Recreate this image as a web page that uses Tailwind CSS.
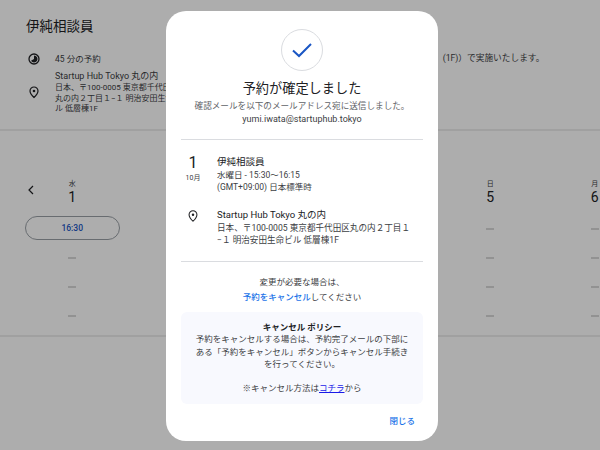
<!DOCTYPE html>
<html lang="ja">
<head>
  <meta charset="UTF-8" />
  <title>予約が確定しました</title>
  <script src="https://cdn.jsdelivr.net/npm/@tailwindcss/browser@4"></script>
</head>
<body class="relative w-[600px] h-[450px] overflow-hidden bg-white text-[#3c4043] font-['Roboto','Noto_Sans_CJK_JP',sans-serif]">

  <!-- Page behind the dialog -->
  <div class="h-[131px] border-b-2 border-[#ececec] pl-[26px] pt-[17px]">
    <h1 class="text-[13.5px] leading-[18px] text-[#202124]">伊純相談員</h1>
    <div class="flex items-center mt-[15px] h-[18px] text-[8.5px] whitespace-nowrap">
      <svg class="w-[16px] h-[16px] mr-[13px]" viewBox="0 0 16 16">
        <circle cx="8" cy="8" r="5" fill="none" stroke="#202124" stroke-width="1.3"/>
        <path d="M8 4.5a3.5 3.5 0 1 1-3 5.3L8 8z" fill="#202124"/>
      </svg>
      <span>45 分の予約</span>
      <span class="ml-[342px] text-[8.7px]">(1F)）で実施いたします。</span>
    </div>
    <div class="flex items-center mt-[2px]">
      <svg class="w-[16px] h-[16px] mr-[13px]" viewBox="0 0 16 16">
        <path d="M8 3a4 4 0 0 0-4 4c0 2.8 4 6.5 4 6.5s4-3.7 4-6.5a4 4 0 0 0-4-4z" fill="none" stroke="#202124" stroke-width="1.2"/>
        <circle cx="8" cy="7" r="1.3" fill="#202124"/>
      </svg>
      <div class="whitespace-nowrap">
        <div class="text-[9px] leading-[12px]">Startup Hub Tokyo 丸の内</div>
        <div class="text-[8px] leading-[10.5px] mt-[1px]">日本、〒100-0005 東京都千代田区<br>丸の内２丁目１−１ 明治安田生命ビ<br>ル 低層棟1F</div>
      </div>
    </div>
  </div>

  <div class="relative h-[206px] border-b-2 border-[#ececec]">
    <svg class="absolute left-[26px] top-[53px] w-[10px] h-[12px]" viewBox="0 0 10 12">
      <path d="M7 2 3 6l4 4" fill="none" stroke="#202124" stroke-width="1.2"/>
    </svg>
    <div class="ml-[20px] w-[580px] overflow-hidden grid grid-cols-[repeat(6,104.5px)] pt-[48px] text-center">
      <div class="flex flex-col items-center">
        <div class="text-[7px] leading-[10px]">水</div>
        <div class="text-[14px] leading-[17px] text-[#202124]">1</div>
        <div class="mt-[10px] w-[95px] h-[24px] border border-[#9aa0a6] rounded-[12px] flex items-center justify-center text-[8.5px] font-medium text-[#1a56c4]">16:30</div>
        <div class="mt-[17px] w-[8px] h-[2px] bg-[#d8d8d8]"></div>
        <div class="mt-[27px] w-[8px] h-[2px] bg-[#d8d8d8]"></div>
        <div class="mt-[27px] w-[8px] h-[2px] bg-[#d8d8d8]"></div>
      </div>
      <div></div>
      <div></div>
      <div></div>
      <div class="flex flex-col items-center">
        <div class="text-[7px] leading-[10px]">日</div>
        <div class="text-[14px] leading-[17px] text-[#202124]">5</div>
        <div class="mt-[22px] w-[8px] h-[2px] bg-[#d8d8d8]"></div>
        <div class="mt-[27px] w-[8px] h-[2px] bg-[#d8d8d8]"></div>
        <div class="mt-[27px] w-[8px] h-[2px] bg-[#d8d8d8]"></div>
        <div class="mt-[27px] w-[8px] h-[2px] bg-[#d8d8d8]"></div>
      </div>
      <div class="flex flex-col items-center">
        <div class="text-[7px] leading-[10px]">月</div>
        <div class="text-[14px] leading-[17px] text-[#202124]">6</div>
        <div class="mt-[22px] w-[8px] h-[2px] bg-[#d8d8d8]"></div>
        <div class="mt-[27px] w-[8px] h-[2px] bg-[#d8d8d8]"></div>
        <div class="mt-[27px] w-[8px] h-[2px] bg-[#d8d8d8]"></div>
        <div class="mt-[27px] w-[8px] h-[2px] bg-[#d8d8d8]"></div>
      </div>
    </div>
  </div>

  <!-- Scrim -->
  <div class="absolute inset-0 bg-black/32"></div>

  <!-- Dialog -->
  <div class="absolute left-[166px] top-[11px] w-[272px] h-[430px] bg-white rounded-[20px] px-[15px] pt-[18px]">
    <div class="flex flex-col items-center border-b border-[#dadce0] h-[111px]">
      <div class="w-[42px] h-[42px] rounded-full border border-[#dadce0] flex items-center justify-center">
        <svg class="w-[24px] h-[24px]" viewBox="0 0 24 24">
          <path d="M3 12.5 9 18 21 6" fill="none" stroke="#1a56c4" stroke-width="2"/>
        </svg>
      </div>
      <h2 class="mt-[8px] text-[13.2px] leading-[20px] text-[#202124] whitespace-nowrap">予約が確定しました</h2>
      <p class="mt-[1px] text-[8.6px] leading-[12px] text-[#5f6368] whitespace-nowrap">確認メールを以下のメールアドレス宛に送信しました。</p>
      <p class="mt-[1px] text-[9px] leading-[12px] text-[#3c4043]">yumi.iwata@startuphub.tokyo</p>
    </div>

    <div class="border-b border-[#dadce0] h-[122px] pt-[14px]">
      <div class="flex">
        <div class="w-[36px] pr-[12px] text-center">
          <div class="text-[16px] leading-[18px] text-[#202124]">1</div>
          <div class="text-[7px] leading-[10px] mt-[1px]">10月</div>
        </div>
        <div class="pt-[1px]">
          <div class="text-[9.5px] leading-[13px] text-[#202124]">伊純相談員</div>
          <div class="text-[8.5px] leading-[12px] mt-[1px]">水曜日 - 15:30〜16:15</div>
          <div class="text-[8.5px] leading-[12px]">(GMT+09:00) 日本標準時</div>
        </div>
      </div>
      <div class="flex mt-[15px]">
        <div class="w-[36px] pr-[12px] pt-[1px] flex justify-center">
          <svg class="w-[14px] h-[14px]" viewBox="0 0 16 16">
            <path d="M8 2a4.5 4.5 0 0 0-4.5 4.5C3.5 9.5 8 14 8 14s4.5-4.5 4.5-7.5A4.5 4.5 0 0 0 8 2z" fill="none" stroke="#202124" stroke-width="1.2"/>
            <circle cx="8" cy="6.5" r="1.4" fill="#202124"/>
          </svg>
        </div>
        <div class="w-[206px]">
          <div class="text-[9.5px] leading-[13px] text-[#202124]">Startup Hub Tokyo 丸の内</div>
          <div class="text-[8.6px] leading-[12px] mt-[1px] whitespace-nowrap">日本、〒100-0005 東京都千代田区丸の内２丁目１<br>−１ 明治安田生命ビル 低層棟1F</div>
        </div>
      </div>
    </div>

    <div class="pt-[13px] text-center text-[8.5px] leading-[15px]">
      <p>変更が必要な場合は、</p>
      <p><span class="text-[#1a73e8] font-medium">予約をキャンセル</span>してください</p>
    </div>

    <div class="mt-[7px] h-[92px] rounded-[6px] bg-[#f8f9fe] px-[14px] pt-[9px] text-center text-[8.5px] leading-[12.3px]">
      <p class="font-bold text-[#202124]">キャンセル ポリシー</p>
      <p>予約をキャンセルする場合は、予約完了メールの下部にある「予約をキャンセル」ボタンからキャンセル手続きを行ってください。</p>
      <p class="mt-[12.3px]">※キャンセル方法は<span class="text-[#1a1ae8] underline">コチラ</span>から</p>
    </div>

    <div class="mt-[11px] pr-[8px] text-right text-[8.5px] leading-[12px] font-medium text-[#1a73e8]">閉じる</div>
  </div>
</body>
</html>
